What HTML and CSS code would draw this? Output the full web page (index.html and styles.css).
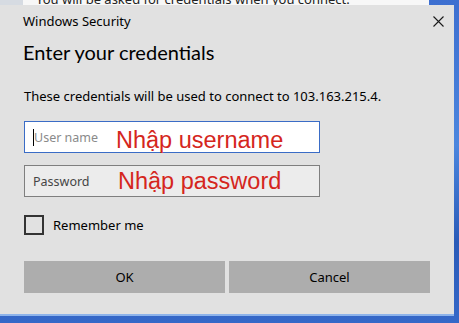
FILE: index.html
```html
<!DOCTYPE html>
<html lang="en">
<head>
<meta charset="utf-8">
<title>Windows Security</title>
<link rel="stylesheet" href="styles.css">
</head>
<body>
<div class="desktop">
  <div class="back-window">
    <div class="back-panel">You will be asked for credentials when you connect.</div>
  </div>
  <div class="dialog">
    <div class="titlebar">
      <span class="title">Windows Security</span>
      <svg class="close" width="11" height="11" viewBox="0 0 11 11"><path d="M0.5 0.5 L10.5 10.5 M10.5 0.5 L0.5 10.5" stroke="#1a1a1a" stroke-width="1.1" fill="none"/></svg>
    </div>
    <h1 class="heading">Enter your credentials</h1>
    <p class="info">These credentials will be used to connect to 103.163.215.4.</p>
    <div class="field field-active">
      <span class="caret"></span><span class="placeholder">User name</span>
      <span class="note">Nhập username</span>
    </div>
    <div class="field field-idle">
      <span class="placeholder dark">Password</span>
      <span class="note note-pw">Nhập password</span>
    </div>
    <label class="remember"><span class="checkbox"></span><span>Remember me</span></label>
    <div class="buttons">
      <div class="btn">OK</div>
      <div class="btn">Cancel</div>
    </div>
  </div>
</div>
</body>
</html>
```
FILE: styles.css
```css
html, body {
  margin: 0;
  padding: 0;
}
body {
  width: 459px;
  height: 323px;
  overflow: hidden;
  background: #1f3f7e;
  font-family: "Segoe UI", "Noto Sans", sans-serif;
}
.desktop {
  position: relative;
  width: 459px;
  height: 323px;
  background: linear-gradient(180deg, #3d6fd0 0%, #4b86de 45%, #2a5bb8 75%, #3568c8 100%);
}
.back-window {
  position: absolute;
  left: 0;
  top: -20px;
  width: 429px;
  height: 25px;
  background: #d6dbe2;
}
.back-panel {
  margin-left: 23px;
  height: 25px;
  background: #f7f7f7;
  font-size: 13px;
  line-height: 14px;
  padding-left: 13px;
  padding-top: 12px;
  box-sizing: border-box;
  color: #222;
  white-space: nowrap;
  overflow: hidden;
}
.dialog {
  position: absolute;
  left: 0;
  top: 5px;
  width: 454px;
  height: 311px;
  box-sizing: border-box;
  background: #e1e1e1;
  border-bottom: 2px solid #8db3ea;
  padding: 0 24px 0 23px;
  display: flex;
  flex-direction: column;
}
.titlebar {
  height: 33px;
  display: flex;
  align-items: center;
  justify-content: space-between;
  margin-right: -14px;
}
.title {
  font-size: 13px;
  color: #000;
  margin-top: -1px;
}
.close {
  margin-top: -1px;
}
.heading {
  margin: 0;
  font-family: "Lato", "Noto Sans", sans-serif;
  font-weight: normal;
  font-size: 20px;
  line-height: 28px;
  color: #000;
  height: 28px;
}
.info {
  margin: 22px 0 0 1px;
  font-size: 13px;
  line-height: 16px;
  color: #000;
}
.field {
  position: relative;
  margin-top: 17px;
  margin-left: 1px;
  width: 296px;
  height: 32px;
  box-sizing: border-box;
  display: flex;
  align-items: center;
  padding-left: 8px;
}
.field-active {
  background: #ffffff;
  border: 1px solid #3a6cc6;
}
.field-idle {
  margin-top: 12px;
  background: #ececec;
  border: 1px solid #7f7f7f;
}
.caret {
  width: 1px;
  height: 17px;
  background: #000;
}
.placeholder {
  font-size: 12.5px;
  color: #8a8a8a;
}
.placeholder.dark {
  color: #454545;
}
.note {
  position: absolute;
  left: 91px;
  top: 5px;
  font-family: "Liberation Sans", Arial, sans-serif;
  font-size: 23.5px;
  line-height: 26px;
  color: #d5261d;
  white-space: nowrap;
}
.note-pw {
  left: 93px;
  top: 2px;
}
.remember {
  margin-top: 18px;
  margin-left: 1px;
  display: flex;
  align-items: center;
  gap: 9px;
  font-size: 13px;
  color: #000;
  height: 20px;
}
.checkbox {
  width: 20px;
  height: 20px;
  box-sizing: border-box;
  border: 2px solid #333;
}
.buttons {
  margin-top: 26px;
  margin-left: 1px;
  display: flex;
  gap: 4px;
}
.btn {
  width: 201px;
  height: 32px;
  background: #adadad;
  display: flex;
  align-items: center;
  justify-content: center;
  font-size: 13px;
  color: #000;
}
```
